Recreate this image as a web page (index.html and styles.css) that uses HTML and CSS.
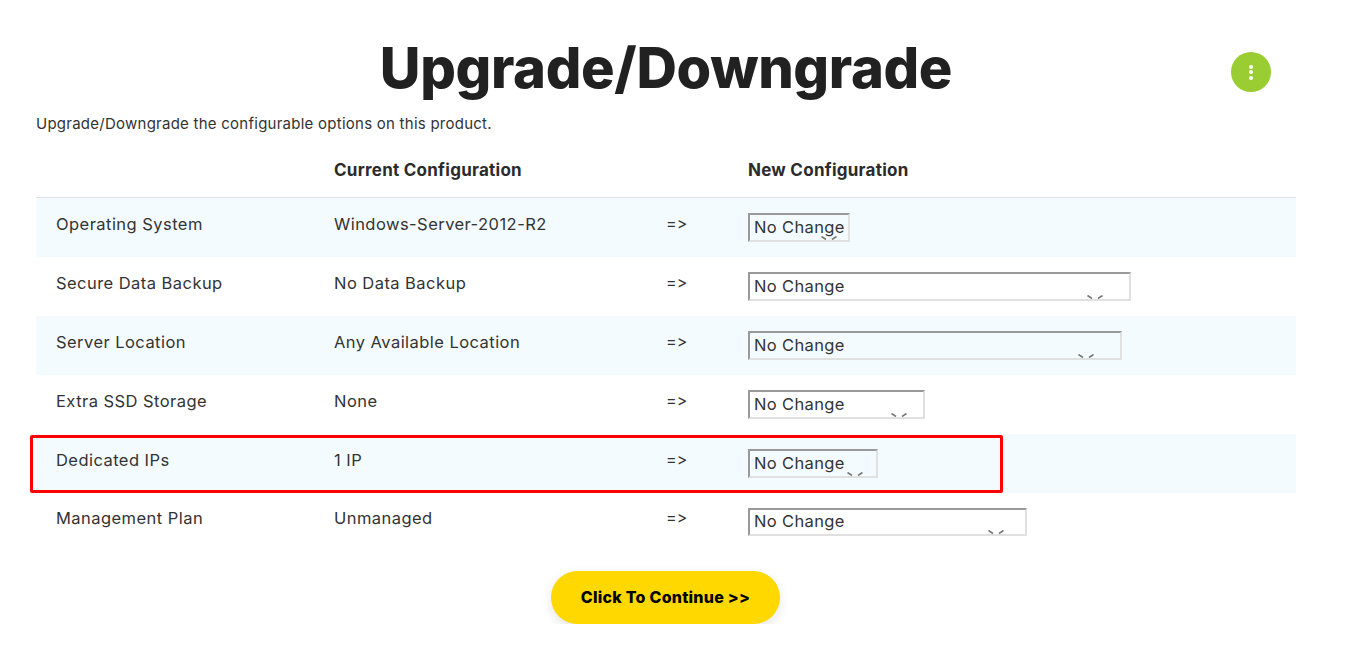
FILE: index.html
```html
<!DOCTYPE html>
<html lang="en">
<head>
  <meta charset="UTF-8">
  <meta name="viewport" content="width=device-width, initial-scale=1.0">
  <title>Upgrade/Downgrade</title>
  <link rel="stylesheet" href="styles.css">
</head>
<body>
  <div class="page">
    <h1>Upgrade/Downgrade</h1>
    <p class="intro">Upgrade/Downgrade the configurable options on this product.</p>

    <div class="table-wrap">
      <table class="config">
        <thead>
          <tr>
            <th class="col-name"></th>
            <th class="col-current">Current Configuration</th>
            <th class="col-arrow"></th>
            <th>New Configuration</th>
          </tr>
        </thead>
        <tbody>
          <tr>
            <td>Operating System</td>
            <td>Windows-Server-2012-R2</td>
            <td class="arrow">=&gt;</td>
            <td><div class="select sel-os">No Change<svg class="chev" viewBox="0 0 16 4"><path d="M0.5 0.5L5 3.5M15.5 0.5L11 3.5"/></svg></div></td>
          </tr>
          <tr>
            <td>Secure Data Backup</td>
            <td>No Data Backup</td>
            <td class="arrow">=&gt;</td>
            <td><div class="select sel-backup">No Change<svg class="chev" viewBox="0 0 16 4"><path d="M0.5 0.5L5 3.5M15.5 0.5L11 3.5"/></svg></div></td>
          </tr>
          <tr>
            <td>Server Location</td>
            <td>Any Available Location</td>
            <td class="arrow">=&gt;</td>
            <td><div class="select sel-location">No Change<svg class="chev" viewBox="0 0 16 4"><path d="M0.5 0.5L5 3.5M15.5 0.5L11 3.5"/></svg></div></td>
          </tr>
          <tr>
            <td>Extra SSD Storage</td>
            <td>None</td>
            <td class="arrow">=&gt;</td>
            <td><div class="select sel-storage">No Change<svg class="chev" viewBox="0 0 16 4"><path d="M0.5 0.5L5 3.5M15.5 0.5L11 3.5"/></svg></div></td>
          </tr>
          <tr>
            <td>Dedicated IPs</td>
            <td>1 IP</td>
            <td class="arrow">=&gt;</td>
            <td><div class="select sel-ips">No Change<svg class="chev" viewBox="0 0 16 4"><path d="M0.5 0.5L5 3.5M15.5 0.5L11 3.5"/></svg></div></td>
          </tr>
          <tr class="last">
            <td>Management Plan</td>
            <td>Unmanaged</td>
            <td class="arrow">=&gt;</td>
            <td><div class="select sel-plan">No Change<svg class="chev" viewBox="0 0 16 4"><path d="M0.5 0.5L5 3.5M15.5 0.5L11 3.5"/></svg></div></td>
          </tr>
        </tbody>
      </table>
      <div class="highlight"></div>
    </div>

    <div class="actions">
      <button class="continue" type="button">Click To Continue &gt;&gt;</button>
    </div>
  </div>

  <button class="fab" type="button" aria-label="Menu"><span></span><span></span><span></span></button>
</body>
</html>
```

FILE: styles.css
```css
body { margin: 0; background-color: #fff; color: #333; font-family: Inter, "Liberation Sans", sans-serif; }
.page { width: 1260px; margin-left: 36px; padding-top: 30px; }
h1 { margin: 0 0 6px; font-size: 56px; line-height: 76px; font-weight: 800; letter-spacing: -0.35px; text-align: center; color: #212121; }
.intro { margin: 0 0 7px; font-size: 15px; line-height: 24px; letter-spacing: 0.25px; }

.table-wrap { position: relative; }
.config { width: 100%; border-collapse: collapse; table-layout: fixed; font-size: 16.5px; letter-spacing: 0.45px; }
.config th { height: 53px; padding: 0 20px 1px; text-align: left; font-weight: 700; font-size: 17px; letter-spacing: 0.26px; color: #2b2b2b; border-bottom: 1px solid #dee2e6; }
.col-name { width: 238px; }
.col-current { width: 293px; }
.col-arrow { width: 41px; }
.config td { height: 59px; box-sizing: border-box; padding: 14px 20px 0; vertical-align: top; line-height: 24px; }
.config .arrow { line-height: 22px; letter-spacing: 0.2px; padding-left: 19px; font-size: 16px; font-variant-ligatures: none; font-feature-settings: "calt" 0; }
.config tbody tr:nth-child(odd) td { background-color: #f3fbff; }
.config .last td { height: 58px; padding-top: 13px; }
.config .last .select { height: 28px; margin-top: 2px; line-height: 22px; }

.select { position: relative; box-sizing: border-box; height: 29px; margin-top: 1px; padding-left: 4px; border: 2px solid; border-color: #999 #e0e0e0 #e0e0e0 #999; font-size: 16.5px; line-height: 24px; color: #333; letter-spacing: 0.35px; }
.chev { position: absolute; bottom: 0; width: 16px; height: 4px; }
.chev path { fill: none; stroke: #777; stroke-width: 1.6; }
.sel-os { width: 102px; }
.sel-os .chev { right: 11px; }
.sel-backup { width: 383px; }
.sel-backup .chev { right: 26px; }
.sel-location { width: 374px; }
.sel-location .chev { right: 26px; }
.sel-storage { width: 177px; }
.sel-storage .chev { right: 16px; }
.sel-ips { width: 130px; }
.sel-ips .chev { right: 13px; }
.sel-plan { width: 279px; }
.sel-plan .chev { right: 21px; }

.highlight { position: absolute; left: -6px; top: 292px; width: 967px; height: 52px; border: 3px solid #f00; border-radius: 2px; }

.actions { display: flex; justify-content: center; margin-top: 20px; padding-right: 1px; }
.continue { width: 229px; height: 53px; border: none; border-radius: 27px; background-color: #ffd800; color: #000; font-family: inherit; font-size: 16px; font-weight: 800; letter-spacing: 0.25px; box-shadow: 0 4px 12px rgba(0,0,0,0.1); cursor: pointer; }

.fab { position: absolute; left: 1231px; top: 52px; width: 40px; height: 40px; padding: 0; border: none; border-radius: 50%; background-color: #9acd32; display: flex; flex-direction: column; align-items: center; justify-content: center; gap: 1.5px; }
.fab span { width: 4px; height: 4px; border-radius: 50%; background-color: #fff; }
```
